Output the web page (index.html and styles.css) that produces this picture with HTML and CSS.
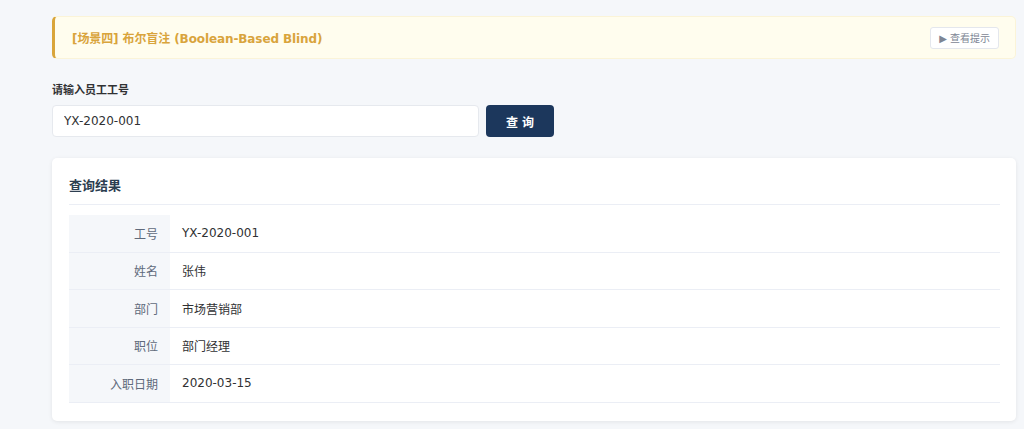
FILE: index.html
```html
<!DOCTYPE html>
<html lang="zh-CN">

<head>
    <meta charset="UTF-8">
    <meta name="viewport" content="width=device-width, initial-scale=1.0">
    <title>员工查询</title>
    <link rel="stylesheet" href="styles.css">
</head>

<body>
    <div class="page">
        <div class="scene">
            <span class="scene-title">[场景四] 布尔盲注 (Boolean-Based Blind)</span>
            <button type="button" class="hint-btn">&#9654; 查看提示</button>
        </div>

        <form class="search">
            <label class="search-label" for="empno">请输入员工工号</label>
            <div class="search-row">
                <input type="text" id="empno" class="search-input" value="YX-2020-001">
                <button type="button" class="search-btn">查 询</button>
            </div>
        </form>

        <div class="card">
            <h3 class="card-title">查询结果</h3>
            <table class="result">
                <tr>
                    <th>工号</th>
                    <td>YX-2020-001</td>
                </tr>
                <tr>
                    <th>姓名</th>
                    <td>张伟</td>
                </tr>
                <tr>
                    <th>部门</th>
                    <td>市场营销部</td>
                </tr>
                <tr>
                    <th>职位</th>
                    <td>部门经理</td>
                </tr>
                <tr>
                    <th>入职日期</th>
                    <td>2020-03-15</td>
                </tr>
            </table>
        </div>
    </div>
</body>

</html>
```

FILE: styles.css
```css
body {
    margin: 0;
    background-color: #f5f7fa;
    font-family: "DejaVu Sans", "Noto Sans CJK SC", sans-serif;
    font-size: 12px;
    color: #303133;
}

.page {
    width: 964px;
    padding: 16px 0 8px 52px;
}

.scene {
    display: flex;
    align-items: center;
    justify-content: space-between;
    height: 43px;
    padding: 0 16px 0 17px;
    background-color: #fffdee;
    border: 1px solid #fbf4d8;
    border-left: 3px solid #d9a53a;
    border-radius: 5px;
    box-sizing: border-box;
}

.scene-title {
    font-weight: bold;
    color: #d9a43c;
    letter-spacing: -0.1px;
}

.hint-btn {
    height: 22px;
    padding: 0 8px;
    background-color: #fff;
    border: 1px solid #e4e7ed;
    border-radius: 3px;
    font-family: inherit;
    font-size: 10px;
    color: #7d8594;
}

.search {
    margin-top: 22px;
}

.search-label {
    display: block;
    font-size: 11px;
    font-weight: bold;
    color: #303133;
    margin-bottom: 8px;
}

.search-row {
    display: flex;
    gap: 7px;
}

.search-input {
    width: 427px;
    height: 32px;
    padding: 0 11px;
    box-sizing: border-box;
    border: 1px solid #e6e9ee;
    border-radius: 4px;
    background-color: #fff;
    font-family: inherit;
    font-size: 12px;
    color: #303133;
}

.search-btn {
    width: 68px;
    height: 32px;
    border: none;
    border-radius: 4px;
    background-color: #1c375c;
    color: #fff;
    font-family: inherit;
    font-size: 12px;
    font-weight: bold;
}

.card {
    margin-top: 21px;
    padding: 17px 16px 18px 17px;
    background-color: #fff;
    border-radius: 5px;
    box-shadow: 0 1px 4px rgba(0, 0, 0, 0.08);
}

.card-title {
    margin: 0;
    padding: 2px 0 9px;
    font-size: 13px;
    line-height: 18px;
    color: #2c3e50;
    border-bottom: 1px solid #ebeef5;
}

.result {
    width: 100%;
    margin-top: 10px;
    border-collapse: collapse;
}

.result th,
.result td {
    height: 36.5px;
    border-bottom: 1px solid #ebeef5;
    font-weight: normal;
    padding: 0 12px;
}

.result th {
    width: 77px;
    text-align: right;
    background-color: #f5f7fa;
    color: #606a7b;
}

.result td {
    color: #303133;
}
```
